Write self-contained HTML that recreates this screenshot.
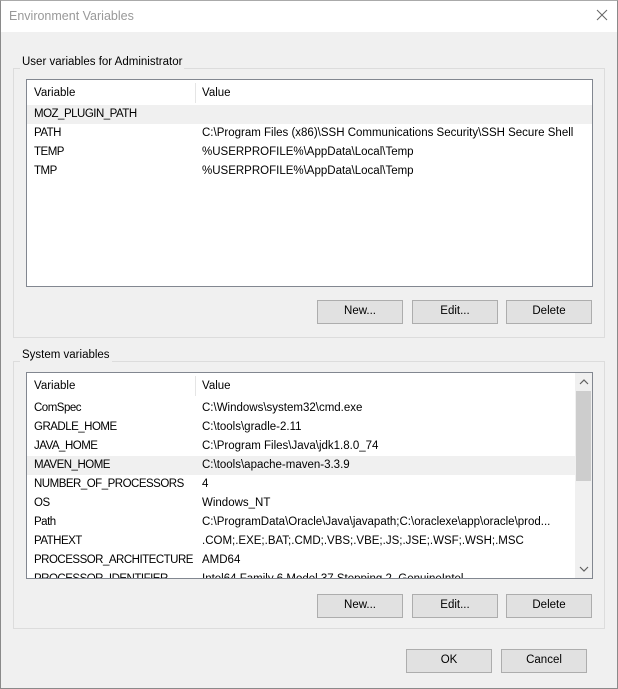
<!DOCTYPE html>
<html><head><meta charset="utf-8"><style>
*{margin:0;padding:0;box-sizing:border-box}
body{width:618px;height:689px;overflow:hidden;background:#f0f0f0;font-family:"Liberation Sans",sans-serif;font-size:11.5px;color:#000;position:relative;letter-spacing:0}
.a{position:absolute}
.win{left:0;top:0;width:618px;height:689px;border:1px solid #8a8a8a;border-top:1px solid #aaa}
.title{left:1px;top:1px;width:616px;height:31px;background:#fff}
.grp{border:1px solid #dcdcdc}
.lbl{background:#f0f0f0;padding:0 2px;line-height:14px}
.list{background:#fff;border:1px solid #828790;overflow:hidden}
.row{position:absolute;left:0;height:19px;line-height:19px;width:100%;white-space:nowrap}
.row span{position:absolute}
.row span:first-child{letter-spacing:-0.5px}
.btn{background:#e1e1e1;border:1px solid #adadad;text-align:center;line-height:21px;height:24px}
</style></head><body>
<div class="a win"></div>
<div class="a title"></div>
<div class="a" style="left:9px;top:9px;color:#999;font-size:12.5px">Environment Variables</div>
<svg class="a" style="left:596px;top:9px" width="12" height="12"><path d="M1 1L11 11M11 1L1 11" stroke="#666" stroke-width="1"/></svg>

<div class="a grp" style="left:13px;top:68px;width:592px;height:270px"></div>
<div class="a lbl" style="left:20px;top:55px">User variables for Administrator</div>
<div class="a list" style="left:26px;top:79px;width:567px;height:208px">
 <div class="row" style="top:1px;height:24px;line-height:24px"><span style="left:7px;letter-spacing:0">Variable</span><span style="left:175px">Value</span></div>
 <div class="a" style="left:168px;top:3px;width:1px;height:20px;background:#e5e5e5"></div>
 <div class="row" style="top:25px;background:#f0f0f0"><span style="left:7px">MOZ_PLUGIN_PATH</span></div>
 <div class="row" style="top:44px"><span style="left:7px">PATH</span><span style="left:175px">C:\Program Files (x86)\SSH Communications Security\SSH Secure Shell</span></div>
 <div class="row" style="top:63px"><span style="left:7px">TEMP</span><span style="left:175px">%USERPROFILE%\AppData\Local\Temp</span></div>
 <div class="row" style="top:82px"><span style="left:7px">TMP</span><span style="left:175px">%USERPROFILE%\AppData\Local\Temp</span></div>
</div>
<div class="a btn" style="left:317px;top:300px;width:86px">New...</div>
<div class="a btn" style="left:412px;top:300px;width:86px">Edit...</div>
<div class="a btn" style="left:506px;top:300px;width:86px">Delete</div>

<div class="a grp" style="left:13px;top:361px;width:592px;height:268px"></div>
<div class="a lbl" style="left:20px;top:348px">System variables</div>
<div class="a list" style="left:26px;top:372px;width:567px;height:207px">
 <div class="row" style="top:1px;height:24px;line-height:24px"><span style="left:7px;letter-spacing:0">Variable</span><span style="left:175px">Value</span></div>
 <div class="a" style="left:168px;top:3px;width:1px;height:20px;background:#e5e5e5"></div>
 <div class="row" style="top:26px"><span style="left:7px">ComSpec</span><span style="left:175px">C:\Windows\system32\cmd.exe</span></div>
 <div class="row" style="top:45px"><span style="left:7px">GRADLE_HOME</span><span style="left:175px">C:\tools\gradle-2.11</span></div>
 <div class="row" style="top:64px"><span style="left:7px">JAVA_HOME</span><span style="left:175px">C:\Program Files\Java\jdk1.8.0_74</span></div>
 <div class="row" style="top:83px;background:#f0f0f0"><span style="left:7px">MAVEN_HOME</span><span style="left:175px">C:\tools\apache-maven-3.3.9</span></div>
 <div class="row" style="top:102px"><span style="left:7px">NUMBER_OF_PROCESSORS</span><span style="left:175px">4</span></div>
 <div class="row" style="top:121px"><span style="left:7px">OS</span><span style="left:175px">Windows_NT</span></div>
 <div class="row" style="top:140px"><span style="left:7px">Path</span><span style="left:175px">C:\ProgramData\Oracle\Java\javapath;C:\oraclexe\app\oracle\prod...</span></div>
 <div class="row" style="top:159px"><span style="left:7px">PATHEXT</span><span style="left:175px">.COM;.EXE;.BAT;.CMD;.VBS;.VBE;.JS;.JSE;.WSF;.WSH;.MSC</span></div>
 <div class="row" style="top:178px"><span style="left:7px">PROCESSOR_ARCHITECTURE</span><span style="left:175px">AMD64</span></div>
 <div class="row" style="top:197px"><span style="left:7px">PROCESSOR_IDENTIFIER</span><span style="left:175px">Intel64 Family 6 Model 37 Stepping 2, GenuineIntel</span></div>
 <div class="a" style="left:548px;top:0;width:17px;height:205px;background:#f0f0f0"></div>
 <div class="a" style="left:549px;top:18px;width:15px;height:90px;background:#cdcdcd"></div>
 <svg class="a" style="left:552px;top:5px" width="10" height="8"><path d="M1 6L5 2L9 6" stroke="#606060" fill="none" stroke-width="1.2"/></svg>
 <svg class="a" style="left:552px;top:192px" width="10" height="8"><path d="M1 2L5 6L9 2" stroke="#606060" fill="none" stroke-width="1.2"/></svg>
</div>
<div class="a btn" style="left:317px;top:594px;width:86px">New...</div>
<div class="a btn" style="left:412px;top:594px;width:86px">Edit...</div>
<div class="a btn" style="left:506px;top:594px;width:86px">Delete</div>

<div class="a btn" style="left:406px;top:649px;width:86px">OK</div>
<div class="a btn" style="left:501px;top:649px;width:86px">Cancel</div>
</body></html>
